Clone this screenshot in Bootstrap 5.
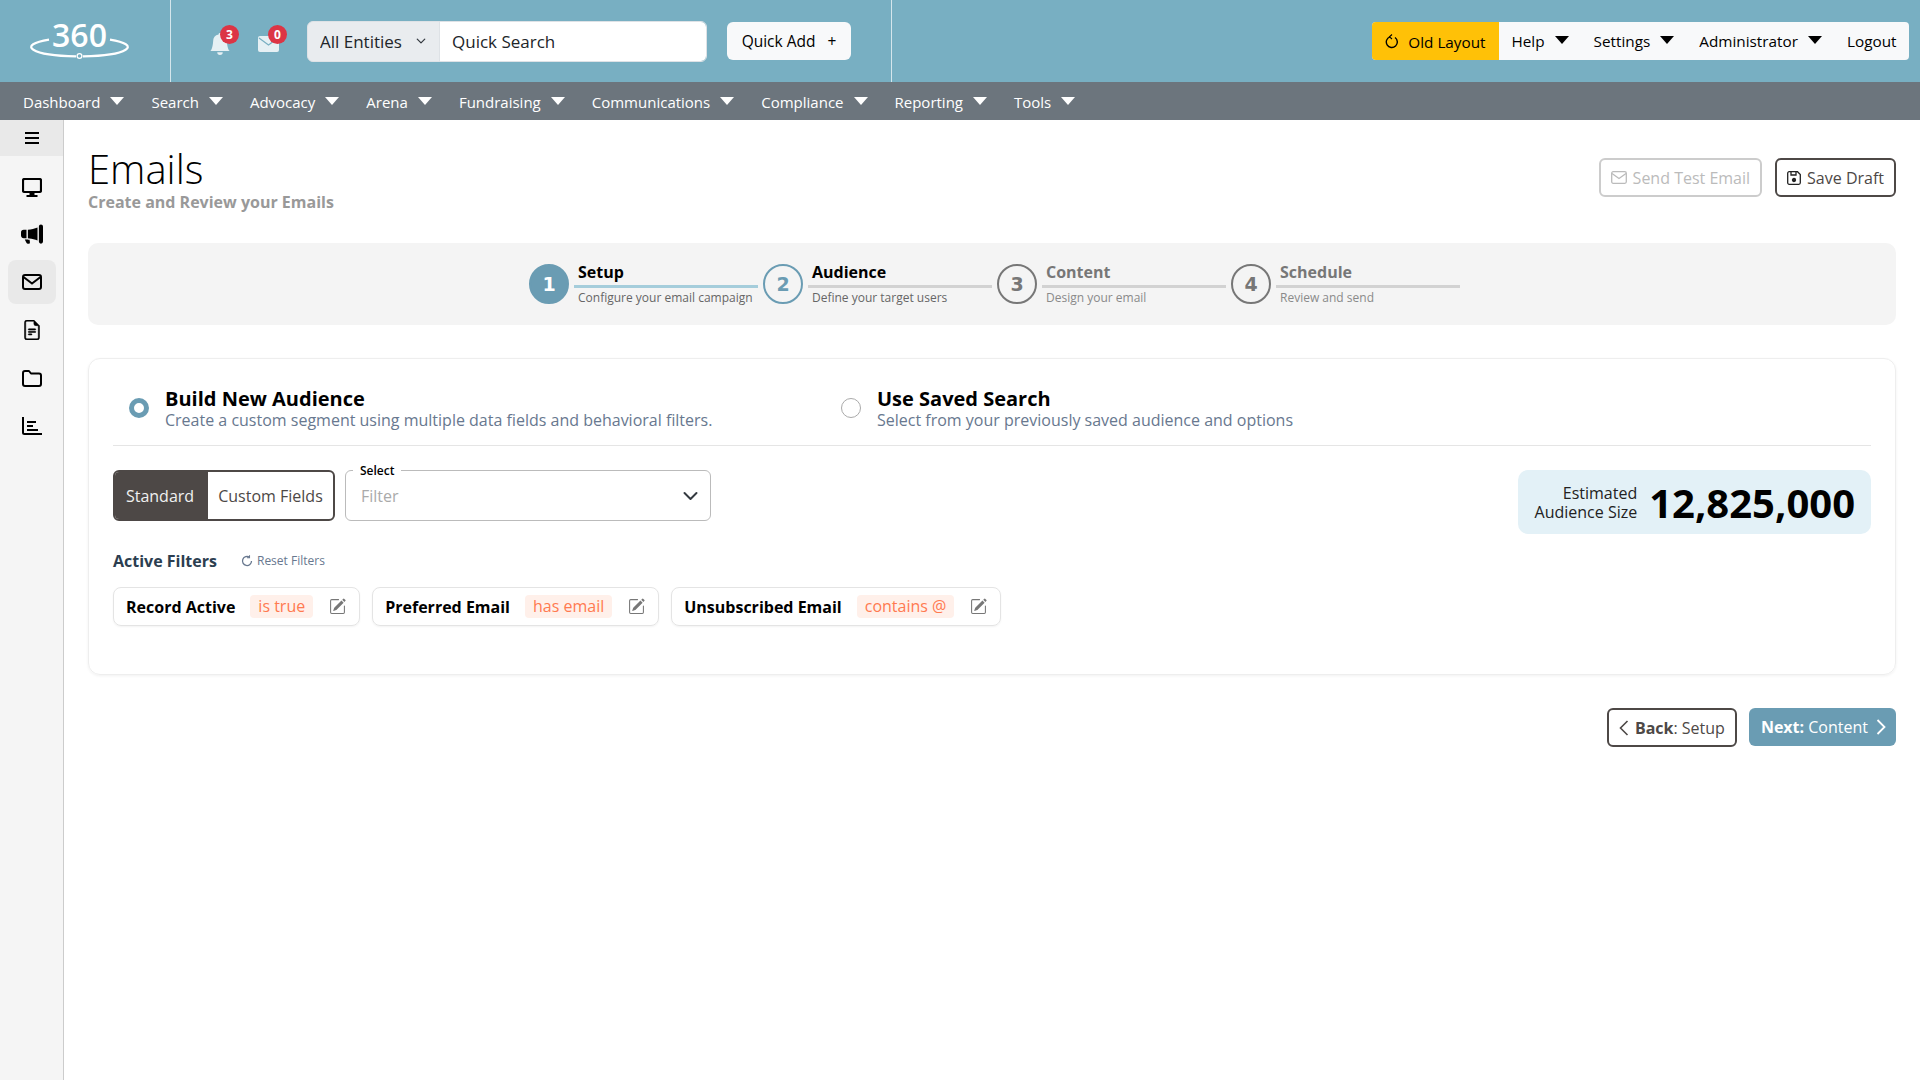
<!DOCTYPE html>
<html lang="en">
<head>
    <meta charset="UTF-8">
    <meta name="viewport" content="width=device-width, initial-scale=1.0">
    <title>Emails</title>
    <link href="https://cdn.jsdelivr.net/npm/bootstrap@5.3.0/dist/css/bootstrap.min.css" rel="stylesheet">
    <style>
        body {
            font-family: "Open Sans", "Noto Sans", sans-serif;
            font-size: 16px;
            color: #000;
            background: #fff;
        }
        .dropdown-toggle::after {
            margin-left: 10px;
            vertical-align: 3px;
            border-top: 8px solid;
            border-right: 7px solid transparent;
            border-left: 7px solid transparent;
            border-bottom: 0;
        }
        /* top bar */
        .top-bar {
            height: 82px;
            background: #78afc2;
        }
        .logo-area {
            width: 171px;
            height: 82px;
            border-right: 1px solid #d5e6ec;
            padding: 8px 0 0 20px;
        }
        .logo-area svg { display: block; }
        .tools-area {
            width: 721px;
            height: 82px;
            border-right: 1px solid #d5e6ec;
            padding-left: 38px;
        }
        .note-icon {
            width: 22px;
            height: 24px;
            margin-top: 2px;
            margin-right: 27px;
            color: #e6f0f4;
        }
        .note-badge {
            top: -5px;
            left: 11px;
            width: 19px;
            height: 19px;
            padding: 0;
            font-size: 12px;
            line-height: 19px;
            background: #dc3545;
            color: #fff;
            border-radius: 50%;
            text-align: center;
            font-weight: 700;
        }
        .note-badge-b { left: 10px; }
        .search-group {
            width: 400px;
            height: 41px;
        }
        .search-group .form-select {
            flex: 0 0 133px;
            width: 133px;
            font-size: 17px;
            color: #212529;
            background-color: #e9ecef;
            background-size: 12px 10px;
            padding: 2px 30px 0 12px;
        }
        .search-group .form-control {
            font-size: 17px;
            color: #212529;
            padding: 2px 12px 0;
        }
        .search-group .form-control::placeholder { color: #212529; }
        .quick-add {
            width: 124px;
            height: 38px;
            margin-left: 20px;
            font-size: 15.5px;
            background: #f8f9fa;
            border: 0;
            color: #000;
            padding: 2px 0 0;
        }
        .quick-add span { margin-left: 8px; }
        .right-menu {
            margin-right: 11px;
            height: 38px;
            background: #f8f9fa;
            border-radius: 4px;
            overflow: hidden;
        }
        .old-layout {
            width: 127px;
            height: 38px;
            padding-top: 2px;
            background: #ffc107;
            color: #000;
            font-size: 15.3px;
            gap: 9px;
        }
        .right-menu .nav-link {
            color: #000;
            padding: 0 12.5px;
            line-height: 40px;
            font-size: 15.3px;
        }
        /* main nav */
        .main-nav {
            height: 38px;
            background: #6c757d;
            padding-left: 9.5px;
        }
        .main-nav .nav-link {
            color: #fff;
            padding: 0 13.5px;
            line-height: 40px;
            font-size: 15px;
        }
        /* sidebar */
        .side-bar {
            width: 64px;
            min-height: 960px;
            background: #f5f5f5;
            border-right: 1px solid #ccc;
            flex: none;
        }
        .side-top {
            height: 36px;
            background: #e9e9e9;
            margin-bottom: 8px;
        }
        .side-item {
            width: 48px;
            height: 44px;
            margin: 0 0 4px 8px;
            border-radius: 8px;
            color: #000;
        }
        .side-item.active { background: #e9e9e9; }
        .side-mon { margin-top: 3px; }
        /* page */
        .page-body { padding: 25px 24px 0; }
        .page-title {
            font-size: 40px;
            font-weight: 300;
            line-height: 47px;
            margin: 0;
        }
        .page-sub {
            font-size: 16px;
            font-weight: 700;
            line-height: 20px;
            color: #999;
        }
        .head-btns { padding-top: 13px; gap: 13px; }
        .outline-btn {
            height: 39px;
            padding: 0 10px;
            border: 2px solid #4d4846;
            border-radius: 6px;
            background: #fff;
            color: #4d4846;
            font-size: 16px;
            gap: 6px;
        }
        .outline-btn.off {
            border-color: #ccc;
            color: #bbb;
            opacity: 1;
        }
        .wiz-band {
            height: 82px;
            margin-top: 31px;
            background: #f4f4f4;
            border-radius: 10px;
            padding-left: 10px;
        }
        .wiz-step { width: 234px; }
        .wiz-num {
            width: 40px;
            height: 40px;
            border-radius: 50%;
            border: 2.5px solid #777;
            color: #777;
            font-family: "DejaVu Sans", sans-serif;
            font-size: 19px;
            font-weight: 700;
            flex: none;
        }
        .wiz-step.done .wiz-num { background: #6a9cb3; border-color: #6a9cb3; color: #fff; }
        .wiz-step.now .wiz-num { border-color: #6a9cb3; color: #6a9cb3; }
        .wiz-body { flex: 1; margin: 0 5px; }
        .wiz-title {
            height: 23px;
            padding-left: 4px;
            font-size: 16px;
            font-weight: 700;
            line-height: 20px;
            color: #777;
        }
        .wiz-line { height: 3px; background: #d2d2d2; }
        .wiz-desc {
            padding: 1px 0 0 4px;
            font-size: 12px;
            line-height: 18px;
            color: #8a8a8a;
        }
        .wiz-step.done .wiz-title, .wiz-step.now .wiz-title { color: #000; }
        .wiz-step.done .wiz-line { background: #a5cddb; }
        .wiz-step.done .wiz-desc, .wiz-step.now .wiz-desc { color: #666; }
        .aud-card {
            margin-top: 33px;
            padding: 28px 24px 48px;
            border: 1px solid #eee;
            border-radius: 12px;
            box-shadow: 0 1px 3px rgba(0, 0, 0, .06);
        }
        .aud-row {
            padding-bottom: 15px;
            border-bottom: 1px solid #e5e5e5;
        }
        .aud-opt {
            width: 712px;
            padding-left: 16px;
            gap: 16px;
        }
        .aud-dot {
            width: 20px;
            height: 20px;
            margin-top: 11px;
            border-radius: 50%;
            border: 5px solid #6a9cb3;
            background: #fff;
            flex: none;
        }
        .aud-dot.off { border: 1px solid #aaa; }
        .aud-name {
            font-size: 20px;
            font-weight: 700;
            line-height: 24px;
        }
        .aud-text {
            font-size: 16px;
            line-height: 19px;
            color: #68788f;
        }
        .filter-zone { margin-top: 24px; }
        .kind-switch {
            width: 222px;
            height: 51px;
            border: 2px solid #4d4846;
            border-radius: 6px;
            overflow: hidden;
        }
        .kind-on {
            width: 93px;
            padding-right: 3px;
            background: #4d4846;
            color: #f0f0f0;
        }
        .kind-off {
            flex: 1;
            color: #4d4846;
        }
        .filter-box {
            width: 366px;
            margin-left: 10px;
        }
        .filter-box .form-select {
            height: 51px;
            padding-left: 15px;
            font-size: 16px;
            color: #aaa;
            border-color: #bbb;
            border-radius: 6px;
            background-size: 21px 16px;
            background-position: right 9px center;
        }
        .filter-label {
            top: -8px;
            left: 8px;
            padding: 0 7px;
            background: #fff;
            font-size: 12px;
            font-weight: 600;
            line-height: 18px;
        }
        .size-box {
            width: 353px;
            height: 64px;
            background: #e3f1f7;
            border-radius: 10px;
            padding: 2px 16px 0 0;
            gap: 12px;
        }
        .size-label {
            font-size: 16px;
            line-height: 19px;
            text-align: right;
            color: #222;
        }
        .size-num {
            font-size: 40px;
            font-weight: 700;
            line-height: 50px;
        }
        .active-head {
            margin-top: 28px;
            line-height: 24px;
            gap: 24px;
        }
        .active-title {
            font-weight: 700;
            color: #2c3e50;
        }
        .reset-link {
            font-size: 12px;
            color: #68788f;
            gap: 4px;
        }
        .chip-row { margin-top: 14px; gap: 12px; }
        .chip-item {
            height: 39px;
            padding: 0 13px 0 12px;
            border: 1px solid #e4e4e4;
            border-radius: 8px;
            box-shadow: 0 1px 2px rgba(0, 0, 0, .05);
            font-weight: 700;
        }
        .chip-val {
            height: 23px;
            margin: 0 16px 0 15px;
            padding: 0 8px;
            border-radius: 4px;
            background: #fff0ea;
            color: #ff7a50;
            font-weight: 400;
            line-height: 23px;
        }
        .chip-edit { color: #777; }
        .foot-btns { margin-top: 33px; gap: 12px; }
        .next-btn {
            height: 38px;
            padding: 0 10px 0 12px;
            border: 0;
            border-radius: 6px;
            background: #6a9cb3;
            color: #fff;
            font-size: 16px;
            gap: 8px;
        }
    </style>
</head>
<body>

    <div class="top-bar d-flex">
        <div class="logo-area">
            <svg width="120" height="60" viewBox="20 8 120 60">
                <text x="79.5" y="47" text-anchor="middle" fill="#fff" font-family="Open Sans" font-size="32" font-weight="600">360</text>
                <path d="M49 39.6A49 9.5 0 0 0 76 56.4M83 56.4A49 9.5 0 0 0 110 39.6" fill="none" stroke="#fff" stroke-width="2.2"/>
                <circle cx="79.5" cy="56" r="2.4" fill="#78afc2" stroke="#fff" stroke-width="1.3"/>
            </svg>
        </div>
        <div class="tools-area d-flex align-items-center">
            <div class="note-icon position-relative">
                <svg width="22" height="22" viewBox="0 0 16 16" fill="currentColor"><path d="M8 16a2 2 0 0 0 2-2H6a2 2 0 0 0 2 2zm.995-14.901a1 1 0 1 0-1.99 0A5.002 5.002 0 0 0 3 6c0 1.098-.5 6-2 7h14c-1.5-1-2-5.902-2-7 0-2.42-1.72-4.44-4.005-4.901z"/></svg>
                <span class="note-badge position-absolute">3</span>
            </div>
            <div class="note-icon position-relative">
                <svg width="22" height="22" viewBox="0 0 22 22"><rect x="0" y="3" width="21" height="16" rx="2" fill="currentColor"/><path d="M1 5l9.500 7L20 5" fill="none" stroke="#78afc2" stroke-width="1.2"/></svg>
                <span class="note-badge note-badge-b position-absolute">0</span>
            </div>
            <div class="input-group search-group">
                <select class="form-select"><option>All Entities</option></select>
                <input type="text" class="form-control" placeholder="Quick Search">
            </div>
            <button type="button" class="btn quick-add">Quick Add <span>+</span></button>
        </div>
        <div class="ms-auto d-flex align-items-center">
            <div class="right-menu d-flex align-items-center">
                <a class="old-layout d-flex align-items-center justify-content-center text-decoration-none" href="#">
                    <svg width="14" height="16" viewBox="0 0 14 16" fill="none" stroke="currentColor" stroke-width="1.4"><path d="M5 2.800A5.500 5.500 0 1 0 10 3.500"/><path d="M7 .5L4.500 2.800 7 5" stroke-width="1.100"/></svg>
                    Old Layout
                </a>
                <a class="nav-link dropdown-toggle" href="#">Help</a>
                <a class="nav-link dropdown-toggle" href="#">Settings</a>
                <a class="nav-link dropdown-toggle" href="#">Administrator</a>
                <a class="nav-link" href="#">Logout</a>
            </div>
        </div>
    </div>

    <nav class="main-nav d-flex">
        <a class="nav-link dropdown-toggle" href="#">Dashboard</a>
        <a class="nav-link dropdown-toggle" href="#">Search</a>
        <a class="nav-link dropdown-toggle" href="#">Advocacy</a>
        <a class="nav-link dropdown-toggle" href="#">Arena</a>
        <a class="nav-link dropdown-toggle" href="#">Fundraising</a>
        <a class="nav-link dropdown-toggle" href="#">Communications</a>
        <a class="nav-link dropdown-toggle" href="#">Compliance</a>
        <a class="nav-link dropdown-toggle" href="#">Reporting</a>
        <a class="nav-link dropdown-toggle" href="#">Tools</a>
    </nav>

    <div class="d-flex">
        <div class="side-bar">
            <div class="side-top d-flex align-items-center justify-content-center">
                <svg width="14" height="12" viewBox="0 0 14 12" stroke="#000" stroke-width="2"><path d="M0 1h14M0 6h14M0 11h14"/></svg>
            </div>
            <div class="side-item d-flex align-items-center justify-content-center">
                <svg class="side-mon" width="20" height="20" viewBox="0 0 20 20"><rect x="1" y="1" width="18" height="13" rx="1.500" fill="none" stroke="#000" stroke-width="2.200"/><path d="M7.500 14h5v3h3v2h-11v-2h3z" fill="#000"/></svg>
            </div>
            <div class="side-item d-flex align-items-center justify-content-center">
                <svg width="22" height="22" viewBox="0 0 16 16" fill="#000"><path d="M13 2.500a1.500 1.500 0 0 1 3 0v11a1.500 1.500 0 0 1-3 0v-11zm-1 .724c-2.067.95-4.539 1.481-7 1.656v6.237a25.222 25.222 0 0 1 1.088.085c2.053.204 4.038.668 5.912 1.560V3.224zm-8 7.841V4.934c-.68.027-1.399.043-2.008.053A2.020 2.020 0 0 0 0 7v2c0 1.106.896 1.996 1.994 2.009a68.140 68.140 0 0 1 .496.008 64 64 0 0 1 1.510.048zm1.390 1.081c.285.021.569.047.85.078l.253 1.690a1 1 0 0 1-.983 1.187h-.548a1 1 0 0 1-.916-.599l-1.314-2.480a65.810 65.810 0 0 1 1.692.064c.327.017.65.037.966.060z"/></svg>
            </div>
            <div class="side-item active d-flex align-items-center justify-content-center">
                <svg width="20" height="16" viewBox="0 0 20 16" fill="none" stroke="#000" stroke-width="2"><rect x="1" y="1" width="18" height="14" rx="2"/><path d="M1.500 3L10 9.500 18.500 3"/></svg>
            </div>
            <div class="side-item d-flex align-items-center justify-content-center">
                <svg width="20" height="20" viewBox="0 0 16 16" fill="#000" stroke="#000" stroke-width=".4"><path d="M5.500 7a.5.5 0 0 0 0 1h5a.5.5 0 0 0 0-1h-5zM5 9.500a.5.5 0 0 1 .5-.5h5a.5.5 0 0 1 0 1h-5a.5.5 0 0 1-.5-.5zm0 2a.5.5 0 0 1 .5-.5h2a.5.5 0 0 1 0 1h-2a.5.5 0 0 1-.5-.5z"/><path d="M9.500 0H4a2 2 0 0 0-2 2v12a2 2 0 0 0 2 2h8a2 2 0 0 0 2-2V4.500L9.500 0zm0 1v2A1.500 1.500 0 0 0 11 4.500h2V14a1 1 0 0 1-1 1H4a1 1 0 0 1-1-1V2a1 1 0 0 1 1-1h5.500z"/></svg>
            </div>
            <div class="side-item d-flex align-items-center justify-content-center">
                <svg width="20" height="17" viewBox="0 0 20 17" fill="none" stroke="#000" stroke-width="2" stroke-linejoin="round"><path d="M1 3a2 2 0 0 1 2-2h4l2 2.500h8a2 2 0 0 1 2 2V14a2 2 0 0 1-2 2H3a2 2 0 0 1-2-2z"/></svg>
            </div>
            <div class="side-item d-flex align-items-center justify-content-center">
                <svg width="20" height="18" viewBox="0 0 20 18" fill="none" stroke="#000" stroke-width="2"><path d="M1 0v15.500a1.500 1.500 0 0 0 1.500 1.500H20M5 5h9M5 9h6M5 13h11"/></svg>
            </div>
        </div>

        <div class="page-body flex-grow-1">
            <div class="d-flex justify-content-between">
                <div>
                    <h1 class="page-title">Emails</h1>
                    <div class="page-sub">Create and Review your Emails</div>
                </div>
                <div class="head-btns d-flex">
                    <button type="button" class="outline-btn off d-flex align-items-center">
                        <svg width="16" height="13" viewBox="0 0 16 13" fill="none" stroke="currentColor" stroke-width="1.300"><rect x=".7" y=".7" width="14.600" height="11.600" rx="1.500"/><path d="M1 2.500l7 5 7-5"/></svg>
                        Send Test Email
                    </button>
                    <button type="button" class="outline-btn d-flex align-items-center">
                        <svg width="14" height="14" viewBox="0 0 14 14" fill="none" stroke="#222" stroke-width="1.300"><path d="M.7 2.200a1.500 1.500 0 0 1 1.500-1.500h8.300l2.800 2.800v8.300a1.500 1.500 0 0 1-1.500 1.500H2.200a1.500 1.500 0 0 1-1.500-1.500z"/><path d="M4 1v3h5V1"/><circle cx="7" cy="9" r="1.500" fill="#222"/></svg>
                        Save Draft
                    </button>
                </div>
            </div>

            <div class="wiz-band d-flex align-items-center justify-content-center">
                <div class="wiz-step done d-flex align-items-center">
                    <div class="wiz-num d-flex align-items-center justify-content-center">1</div>
                    <div class="wiz-body">
                        <div class="wiz-title">Setup</div>
                        <div class="wiz-line"></div>
                        <div class="wiz-desc">Configure your email campaign</div>
                    </div>
                </div>
                <div class="wiz-step now d-flex align-items-center">
                    <div class="wiz-num d-flex align-items-center justify-content-center">2</div>
                    <div class="wiz-body">
                        <div class="wiz-title">Audience</div>
                        <div class="wiz-line"></div>
                        <div class="wiz-desc">Define your target users</div>
                    </div>
                </div>
                <div class="wiz-step d-flex align-items-center">
                    <div class="wiz-num d-flex align-items-center justify-content-center">3</div>
                    <div class="wiz-body">
                        <div class="wiz-title">Content</div>
                        <div class="wiz-line"></div>
                        <div class="wiz-desc">Design your email</div>
                    </div>
                </div>
                <div class="wiz-step d-flex align-items-center">
                    <div class="wiz-num d-flex align-items-center justify-content-center">4</div>
                    <div class="wiz-body">
                        <div class="wiz-title">Schedule</div>
                        <div class="wiz-line"></div>
                        <div class="wiz-desc">Review and send</div>
                    </div>
                </div>
            </div>

            <div class="aud-card">
                <div class="aud-row d-flex">
                    <div class="aud-opt d-flex">
                        <span class="aud-dot"></span>
                        <div>
                            <div class="aud-name">Build New Audience</div>
                            <div class="aud-text">Create a custom segment using multiple data fields and behavioral filters.</div>
                        </div>
                    </div>
                    <div class="aud-opt d-flex">
                        <span class="aud-dot off"></span>
                        <div>
                            <div class="aud-name">Use Saved Search</div>
                            <div class="aud-text">Select from your previously saved audience and options</div>
                        </div>
                    </div>
                </div>

                <div class="filter-zone d-flex justify-content-between align-items-start">
                    <div>
                        <div class="d-flex">
                            <div class="kind-switch d-flex">
                                <div class="kind-on d-flex align-items-center justify-content-center">Standard</div>
                                <div class="kind-off d-flex align-items-center justify-content-center">Custom Fields</div>
                            </div>
                            <div class="filter-box position-relative">
                                <span class="filter-label position-absolute">Select</span>
                                <select class="form-select"><option>Filter</option></select>
                            </div>
                        </div>
                        <div class="active-head d-flex align-items-center">
                            <span class="active-title">Active Filters</span>
                            <a class="reset-link d-flex align-items-center text-decoration-none" href="#">
                                <svg width="12" height="12" viewBox="0 0 12 12" fill="none" stroke="currentColor" stroke-width="1.300"><path d="M10.500 6A4.500 4.500 0 1 1 8.500 2.300"/><path d="M8.500 .2v2.600H6" stroke-width="1.100"/></svg>
                                Reset Filters
                            </a>
                        </div>
                        <div class="chip-row d-flex">
                            <div class="chip-item d-flex align-items-center">
                                Record Active<span class="chip-val">is true</span>
                                <svg class="chip-edit" width="17" height="17" viewBox="0 0 16 16" fill="currentColor"><path d="M15.502 1.940a.5.5 0 0 1 0 .706L14.459 3.690l-2-2L13.502.646a.5.5 0 0 1 .707 0l1.293 1.293zm-1.750 2.456-2-2L4.939 9.210a.5.5 0 0 0-.121.196l-.805 2.414a.25.25 0 0 0 .316.316l2.414-.805a.5.5 0 0 0 .196-.12l6.813-6.814z"/><path d="M1 13.500A1.500 1.500 0 0 0 2.500 15h11a1.500 1.500 0 0 0 1.500-1.500v-6a.5.5 0 0 0-1 0v6a.5.5 0 0 1-.5.5h-11a.5.5 0 0 1-.5-.5v-11a.5.5 0 0 1 .5-.5H9a.5.5 0 0 0 0-1H2.500A1.500 1.500 0 0 0 1 2.500v11z"/></svg>
                            </div>
                            <div class="chip-item d-flex align-items-center">
                                Preferred Email<span class="chip-val">has email</span>
                                <svg class="chip-edit" width="17" height="17" viewBox="0 0 16 16" fill="currentColor"><path d="M15.502 1.940a.5.5 0 0 1 0 .706L14.459 3.690l-2-2L13.502.646a.5.5 0 0 1 .707 0l1.293 1.293zm-1.750 2.456-2-2L4.939 9.210a.5.5 0 0 0-.121.196l-.805 2.414a.25.25 0 0 0 .316.316l2.414-.805a.5.5 0 0 0 .196-.12l6.813-6.814z"/><path d="M1 13.500A1.500 1.500 0 0 0 2.500 15h11a1.500 1.500 0 0 0 1.500-1.500v-6a.5.5 0 0 0-1 0v6a.5.5 0 0 1-.5.5h-11a.5.5 0 0 1-.5-.5v-11a.5.5 0 0 1 .5-.5H9a.5.5 0 0 0 0-1H2.500A1.500 1.500 0 0 0 1 2.500v11z"/></svg>
                            </div>
                            <div class="chip-item d-flex align-items-center">
                                Unsubscribed Email<span class="chip-val">contains @</span>
                                <svg class="chip-edit" width="17" height="17" viewBox="0 0 16 16" fill="currentColor"><path d="M15.502 1.940a.5.5 0 0 1 0 .706L14.459 3.690l-2-2L13.502.646a.5.5 0 0 1 .707 0l1.293 1.293zm-1.750 2.456-2-2L4.939 9.210a.5.5 0 0 0-.121.196l-.805 2.414a.25.25 0 0 0 .316.316l2.414-.805a.5.5 0 0 0 .196-.12l6.813-6.814z"/><path d="M1 13.500A1.500 1.500 0 0 0 2.500 15h11a1.500 1.500 0 0 0 1.500-1.500v-6a.5.5 0 0 0-1 0v6a.5.5 0 0 1-.5.5h-11a.5.5 0 0 1-.5-.5v-11a.5.5 0 0 1 .5-.5H9a.5.5 0 0 0 0-1H2.500A1.500 1.500 0 0 0 1 2.500v11z"/></svg>
                            </div>
                        </div>
                    </div>
                    <div class="size-box d-flex align-items-center justify-content-end">
                        <div class="size-label">Estimated<br>Audience Size</div>
                        <div class="size-num">12,825,000</div>
                    </div>
                </div>
            </div>

            <div class="foot-btns d-flex justify-content-end">
                <button type="button" class="outline-btn d-flex align-items-center">
                    <svg width="10" height="16" viewBox="0 0 10 16" fill="none" stroke="currentColor" stroke-width="1.600"><path d="M8.500 1L1.500 8l7 7"/></svg>
                    <span><b>Back</b>: Setup</span>
                </button>
                <button type="button" class="next-btn d-flex align-items-center">
                    <span><b>Next:</b> Content</span>
                    <svg width="10" height="16" viewBox="0 0 10 16" fill="none" stroke="currentColor" stroke-width="1.800"><path d="M1.500 1l7 7-7 7"/></svg>
                </button>
            </div>
        </div>
    </div>

    <script src="https://cdn.jsdelivr.net/npm/bootstrap@5.3.0/dist/js/bootstrap.bundle.min.js"></script>
</body>
</html>
